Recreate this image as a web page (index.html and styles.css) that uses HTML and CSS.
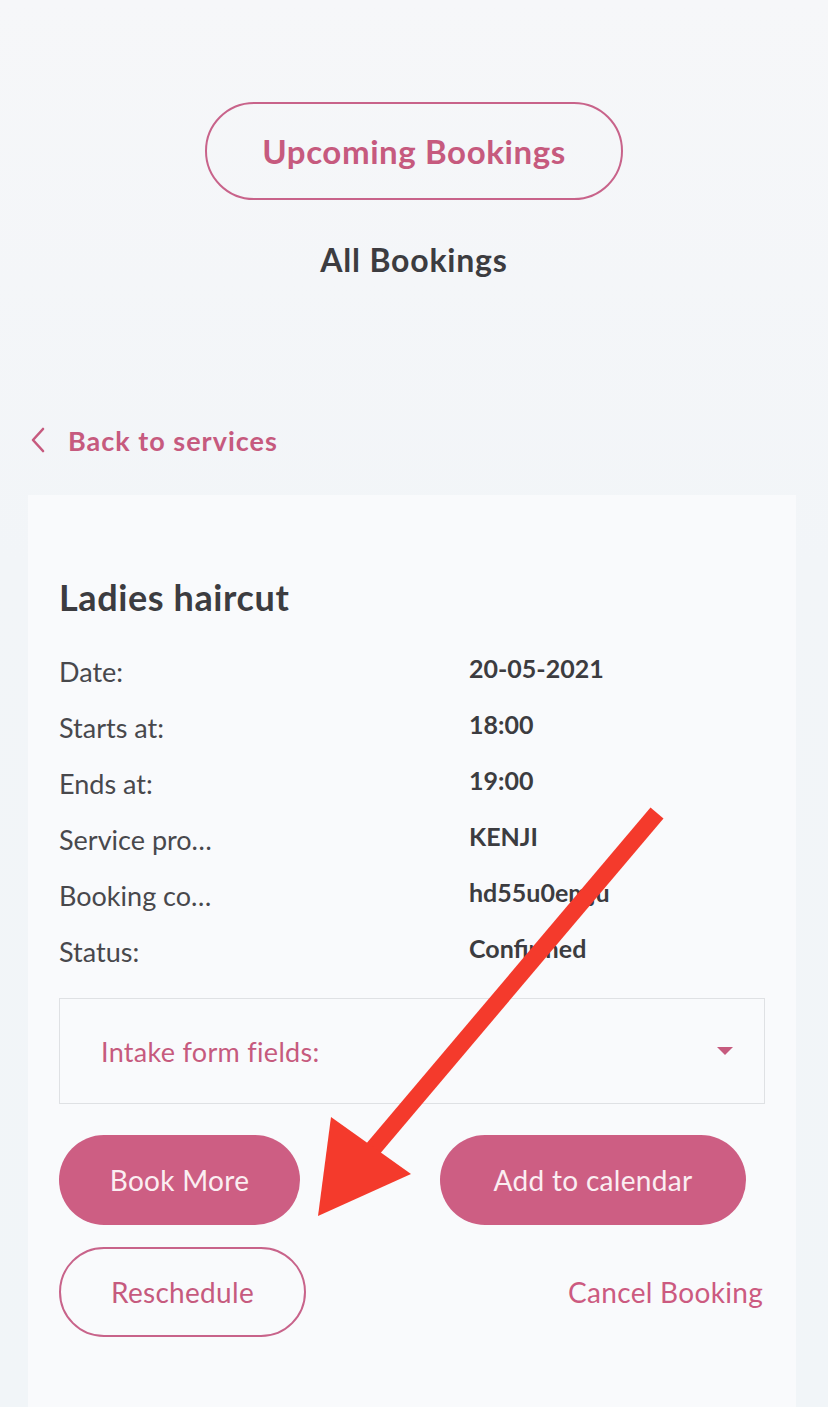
FILE: index.html
```html
<!DOCTYPE html>
<html lang="en">
<head>
<meta charset="utf-8">
<title>Booking details</title>
<link rel="stylesheet" href="styles.css">
</head>
<body>
<div class="page">
  <nav class="tabs">
    <a class="tab tab-active">Upcoming Bookings</a>
    <a class="tab tab-plain">All Bookings</a>
  </nav>

  <a class="back">
    <svg class="back-icon" width="16" height="26" viewBox="0 0 16 26"><path d="M13 2 L3 13 L13 24" fill="none" stroke="#c65a7e" stroke-width="2.6" stroke-linecap="round" stroke-linejoin="round"/></svg>
    <span>Back to services</span>
  </a>

  <section class="card">
    <h1 class="title">Ladies haircut</h1>
    <dl class="details">
      <dt>Date:</dt><dd>20-05-2021</dd>
      <dt>Starts at:</dt><dd>18:00</dd>
      <dt>Ends at:</dt><dd>19:00</dd>
      <dt>Service pro…</dt><dd>KENJI</dd>
      <dt>Booking co…</dt><dd>hd55u0emju</dd>
      <dt>Status:</dt><dd>Confirmed</dd>
    </dl>

    <div class="intake">
      <span>Intake form fields:</span>
      <svg width="18" height="10" viewBox="0 0 18 10"><path d="M1 1 H17 L9 9 Z" fill="#c65a7e"/></svg>
    </div>

    <div class="actions">
      <button class="btn btn-fill btn-book">Book More</button>
      <button class="btn btn-fill btn-cal">Add to calendar</button>
    </div>
    <div class="actions actions-2">
      <button class="btn btn-outline">Reschedule</button>
      <a class="cancel">Cancel Booking</a>
    </div>
  </section>

  <svg class="annotation" width="828" height="1407" viewBox="0 0 828 1407">
    <line x1="657" y1="813" x2="372" y2="1150" stroke="#f43a2c" stroke-width="17"/>
    <polygon points="331,1117 411,1174 318,1216" fill="#f43a2c"/>
  </svg>
</div>
</body>
</html>
```

FILE: styles.css
```css
* { box-sizing: border-box; }
html, body { margin: 0; padding: 0; }
body {
  width: 828px;
  height: 1407px;
  overflow: hidden;
  font-family: "Lato", "Liberation Sans", sans-serif;
  background: linear-gradient(180deg, #f6f7f9 0%, #f2f5f8 40%, #f1f5f8 100%);
  color: #3f3f44;
}
.page {
  position: relative;
  height: 1407px;
}
.tabs {
  display: flex;
  flex-direction: column;
  align-items: center;
  padding-top: 102px;
}
.tab {
  display: flex;
  align-items: center;
  justify-content: center;
  font-weight: 700;
}
.tab-active {
  width: 418px;
  height: 98px;
  border: 2px solid #c8638a;
  border-radius: 49px;
  color: #c65a7e;
  font-size: 33px;
  letter-spacing: 0.6px;
}
.tab-plain {
  margin-top: 39px;
  height: 40px;
  color: #3c3c40;
  font-size: 32px;
  letter-spacing: 0.8px;
}
.back {
  display: flex;
  align-items: center;
  gap: 22px;
  margin: 145px 0 0 30px;
  height: 32px;
  color: #c65a7e;
  font-weight: 700;
  font-size: 27px;
  letter-spacing: 1px;
}
.back-icon { flex: none; }
.card {
  margin: 39px 0 0 28px;
  width: 768px;
  height: 920px;
  background: #f9fafc;
  padding: 78px 31px 0 31px;
}
.title {
  margin: 0;
  height: 48px;
  line-height: 48px;
  font-size: 36px;
  font-weight: 700;
  letter-spacing: 0.6px;
  color: #3c3c40;
}
.details {
  display: grid;
  grid-template-columns: 410px 1fr;
  grid-auto-rows: 56px;
  margin: 22px 0 0 0;
  align-items: center;
}
.details dt {
  font-size: 27px;
  font-weight: 400;
  color: #48484c;
}
.details dd {
  margin: 0;
  font-size: 25px;
  font-weight: 700;
  color: #3c3c40;
  position: relative;
  top: -3px;
}
.intake {
  margin-top: 19px;
  height: 106px;
  border: 1.5px solid #dfe1e4;
  display: flex;
  align-items: center;
  justify-content: space-between;
  padding: 0 30px 0 41px;
  color: #c65a7e;
  font-size: 27px;
  letter-spacing: 0.3px;
}
.actions {
  display: flex;
  justify-content: space-between;
  align-items: center;
  margin-top: 31px;
  padding-right: 19px;
}
.actions-2 {
  margin-top: 22px;
  padding-right: 2px;
}
.btn {
  height: 90px;
  border-radius: 45px;
  font-family: inherit;
  font-size: 28px;
  font-weight: 400;
  letter-spacing: 0.3px;
  padding: 0;
}
.btn-fill {
  background: #cd5e83;
  border: none;
  color: #fbeef2;
}
.btn-book { width: 241px; }
.btn-cal { width: 306px; }
.btn-outline {
  width: 247px;
  background: transparent;
  border: 2px solid #c8638a;
  color: #c65a7e;
}
.cancel {
  color: #cc5a80;
  font-size: 28px;
  letter-spacing: 0.3px;
}
.annotation {
  position: absolute;
  left: 0;
  top: 0;
  pointer-events: none;
}
```
